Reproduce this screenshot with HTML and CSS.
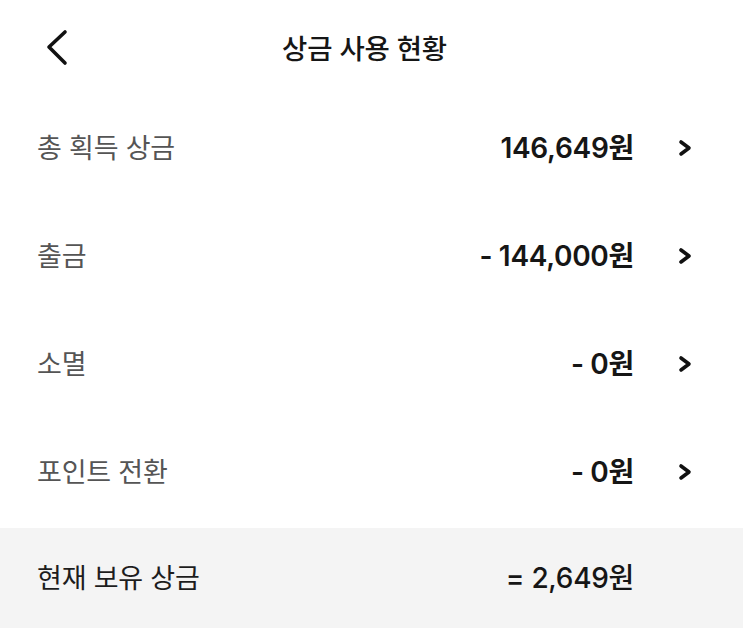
FILE: index.html
```html
<!DOCTYPE html>
<html lang="ko">
<head>
<meta charset="utf-8">
<title>상금 사용 현황</title>
<link rel="stylesheet" href="styles.css">
</head>
<body>
<div class="screen">
  <header class="header">
    <div class="back">
      <svg width="36" height="40" viewBox="0 0 36 40" aria-hidden="true">
        <path d="M22 5 L6 20 L22 36" fill="none" stroke="#111" stroke-width="3.6" stroke-linecap="round" stroke-linejoin="round"/>
      </svg>
    </div>
    <h1 class="title">상금 사용 현황</h1>
    <div></div>
  </header>

  <ul class="list">
    <li class="row">
      <span class="label">총 획득 상금</span>
      <span class="value">146,649원</span>
      <svg class="chev" width="14" height="18" viewBox="0 0 14 18" aria-hidden="true"><path d="M3 3 L11 9 L3 15" fill="none" stroke="#111" stroke-width="3.6" stroke-linecap="round" stroke-linejoin="round"/></svg>
    </li>
    <li class="row">
      <span class="label">출금</span>
      <span class="value">- 144,000원</span>
      <svg class="chev" width="14" height="18" viewBox="0 0 14 18" aria-hidden="true"><path d="M3 3 L11 9 L3 15" fill="none" stroke="#111" stroke-width="3.6" stroke-linecap="round" stroke-linejoin="round"/></svg>
    </li>
    <li class="row">
      <span class="label">소멸</span>
      <span class="value">- 0원</span>
      <svg class="chev" width="14" height="18" viewBox="0 0 14 18" aria-hidden="true"><path d="M3 3 L11 9 L3 15" fill="none" stroke="#111" stroke-width="3.6" stroke-linecap="round" stroke-linejoin="round"/></svg>
    </li>
    <li class="row">
      <span class="label">포인트 전환</span>
      <span class="value">- 0원</span>
      <svg class="chev" width="14" height="18" viewBox="0 0 14 18" aria-hidden="true"><path d="M3 3 L11 9 L3 15" fill="none" stroke="#111" stroke-width="3.6" stroke-linecap="round" stroke-linejoin="round"/></svg>
    </li>
  </ul>

  <div class="total">
    <span class="label total-label">현재 보유 상금</span>
    <span class="value total-value">= 2,649원</span>
    <span class="chev-slot"></span>
  </div>
</div>
</body>
</html>
```

FILE: styles.css
```css
* { box-sizing: border-box; }

html, body {
  margin: 0;
  padding: 0;
  background: #ffffff;
}

body {
  font-family: "Inter", "Noto Sans CJK KR", "Noto Sans", sans-serif;
  color: #111;
}

.screen {
  width: 743px;
  min-height: 638px;
}

.header {
  height: 94px;
  display: grid;
  grid-template-columns: 1fr auto 1fr;
  align-items: center;
  padding: 0 57px 0 43px;
}

.back {
  display: flex;
  align-items: center;
  height: 40px;
}

.back svg { display: block; }

.title {
  margin: 0;
  font-size: 27.5px;
  font-weight: 500;
  color: #161616;
  letter-spacing: -0.2px;
}

.list {
  list-style: none;
  margin: 0;
  padding: 0;
}

.row {
  height: 108px;
  display: flex;
  align-items: center;
  padding: 0 51px 0 37px;
}

.label {
  flex: 1;
  font-size: 27px;
  font-weight: 400;
  color: #555;
  letter-spacing: -0.2px;
  line-height: 1;
}

.value {
  font-size: 28px;
  font-weight: 600;
  color: #161616;
  letter-spacing: -0.3px;
  line-height: 1;
}

.chev {
  display: block;
  margin-left: 44px;
  flex-shrink: 0;
}

.chev-slot {
  width: 14px;
  margin-left: 44px;
  flex-shrink: 0;
}

.total {
  margin-top: 2px;
  height: 100px;
  background: #f4f4f4;
  display: flex;
  align-items: center;
  padding: 0 51px 0 37px;
}

.total-label {
  color: #1d1d1d;
  font-size: 27px;
}

.total-value {
  font-weight: 500;
  color: #161616;
}
```
